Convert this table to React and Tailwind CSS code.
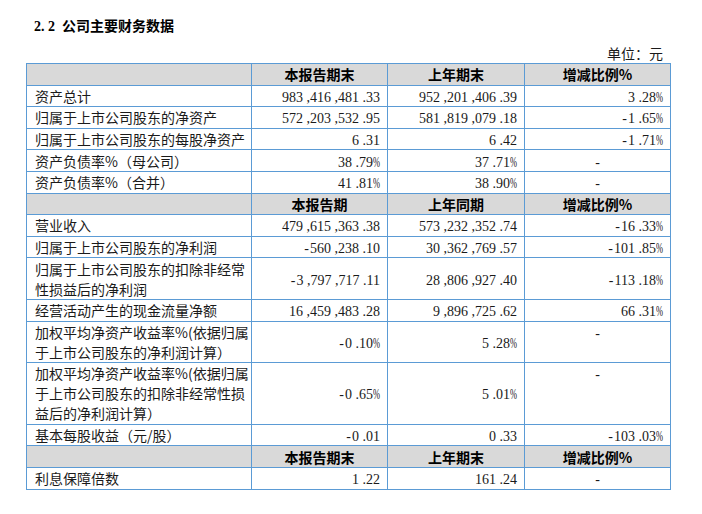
import React from 'react'

const BORDER = 'border border-[#5b9bd5]'

const Num = ({ v }) => (
  <span className="font-['Liberation_Serif',serif]">
    {v.split('').map((c, i) => {
      if (c === ',' || c === '.' || c === ' ') return <span key={i} className="inline-block w-[7px]">{c}</span>
      if (c === '-') return <span key={i} className="inline-block w-[7px] text-center">-</span>
      if (c === '%') return <span key={i} className="inline-block w-[7px] scale-x-60 origin-left">%</span>
      return c
    })}
  </span>
)

// one text line, fixed to 20px so mixed fonts don't stretch the row
const Line = ({ children, className = '' }) => (
  <div className={`h-5 leading-5 overflow-visible whitespace-nowrap ${className}`}>{children}</div>
)

const sections = [
  {
    head: ['本报告期末', '上年期末', '增减比例%'],
    rows: [
      [['资产总计'], '983,416,481.33', '952,201,406.39', '3.28%'],
      [['归属于上市公司股东的净资产'], '572,203,532.95', '581,819,079.18', '-1.65%'],
      [['归属于上市公司股东的每股净资产'], '6.31', '6.42', '-1.71%'],
      [['资产负债率%（母公司）'], '38.79%', '37.71%', null],
      [['资产负债率%（合并）'], '41.81%', '38.90%', null],
    ],
  },
  {
    head: ['本报告期', '上年同期', '增减比例%'],
    rows: [
      [['营业收入'], '479,615,363.38', '573,232,352.74', '-16.33%'],
      [['归属于上市公司股东的净利润'], '-560,238.10', '30,362,769.57', '-101.85%'],
      [['归属于上市公司股东的扣除非经常', '性损益后的净利润'], '-3,797,717.11', '28,806,927.40', '-113.18%'],
      [['经营活动产生的现金流量净额'], '16,459,483.28', '9,896,725.62', '66.31%'],
      [['加权平均净资产收益率%(依据归属', '于上市公司股东的净利润计算）'], '-0.10%', '5.28%', null],
      [
        ['加权平均净资产收益率%(依据归属', '于上市公司股东的扣除非经常性损', '益后的净利润计算）'],
        '-0.65%',
        '5.01%',
        null,
      ],
      [['基本每股收益（元/股）'], '-0.01', '0.33', '-103.03%'],
    ],
  },
  {
    head: ['本报告期末', '上年期末', '增减比例%'],
    rows: [[['利息保障倍数'], '1.22', '161.24', null]],
  },
]

const HeadRow = ({ cells }) => (
  <tr className="bg-[#d9d9d9]">
    <td className={`${BORDER} p-0 py-[0.3px]`}>
      <Line />
    </td>
    {cells.map((c) => (
      <td key={c} className={`${BORDER} p-0 py-[0.3px] text-center font-bold text-black`}>
        <Line>{c}</Line>
      </td>
    ))}
  </tr>
)

const DataRow = ({ row }) => {
  const [label, cur, prev, change] = row
  return (
    <tr>
      <td className={`${BORDER} pl-[8px] pr-0 py-[0.3px] align-top`}>
        {label.map((l, i) => (
          <Line key={i}>{l}</Line>
        ))}
      </td>
      <td className={`${BORDER} pl-0 pr-[7px] py-[0.3px] text-right align-middle`}>
        <Line>
          <Num v={cur} />
        </Line>
      </td>
      <td className={`${BORDER} pl-0 pr-[7px] py-[0.3px] text-right align-middle`}>
        <Line>
          <Num v={prev} />
        </Line>
      </td>
      {change ? (
        <td className={`${BORDER} pl-0 pr-[7px] py-[0.3px] text-right align-middle`}>
          <Line>
            <Num v={change} />
          </Line>
        </td>
      ) : (
        <td className={`${BORDER} p-0 py-[0.3px] text-center align-top`}>
          <Line>
            <Num v="-" />
          </Line>
        </td>
      )}
    </tr>
  )
}

export default function App() {
  return (
    <div className="w-[702px] h-[514px] bg-white font-['Noto_Sans_CJK_SC',sans-serif] text-[14px] leading-5 text-[#1a1a1a]">
      <div className="pt-[15px] pl-[34px]">
        <Line className="font-bold text-black">
          <Num v="2.2 " />
          公司主要财务数据
        </Line>
      </div>
      <div className="ml-[26px] w-[644px] mt-[8px] pr-[7px] text-right">
        <Line>单位：元</Line>
      </div>
      <table className="ml-[26px] w-[644px] table-fixed border-collapse border-[1.5px] border-[#5b9bd5]">
        <colgroup>
          <col className="w-[225px]" />
          <col className="w-[136px]" />
          <col className="w-[137px]" />
          <col className="w-[146px]" />
        </colgroup>
        <tbody>
          {sections.map((s, si) => (
            <React.Fragment key={si}>
              <HeadRow cells={s.head} />
              {s.rows.map((r, ri) => (
                <DataRow key={ri} row={r} />
              ))}
            </React.Fragment>
          ))}
        </tbody>
      </table>
    </div>
  )
}
